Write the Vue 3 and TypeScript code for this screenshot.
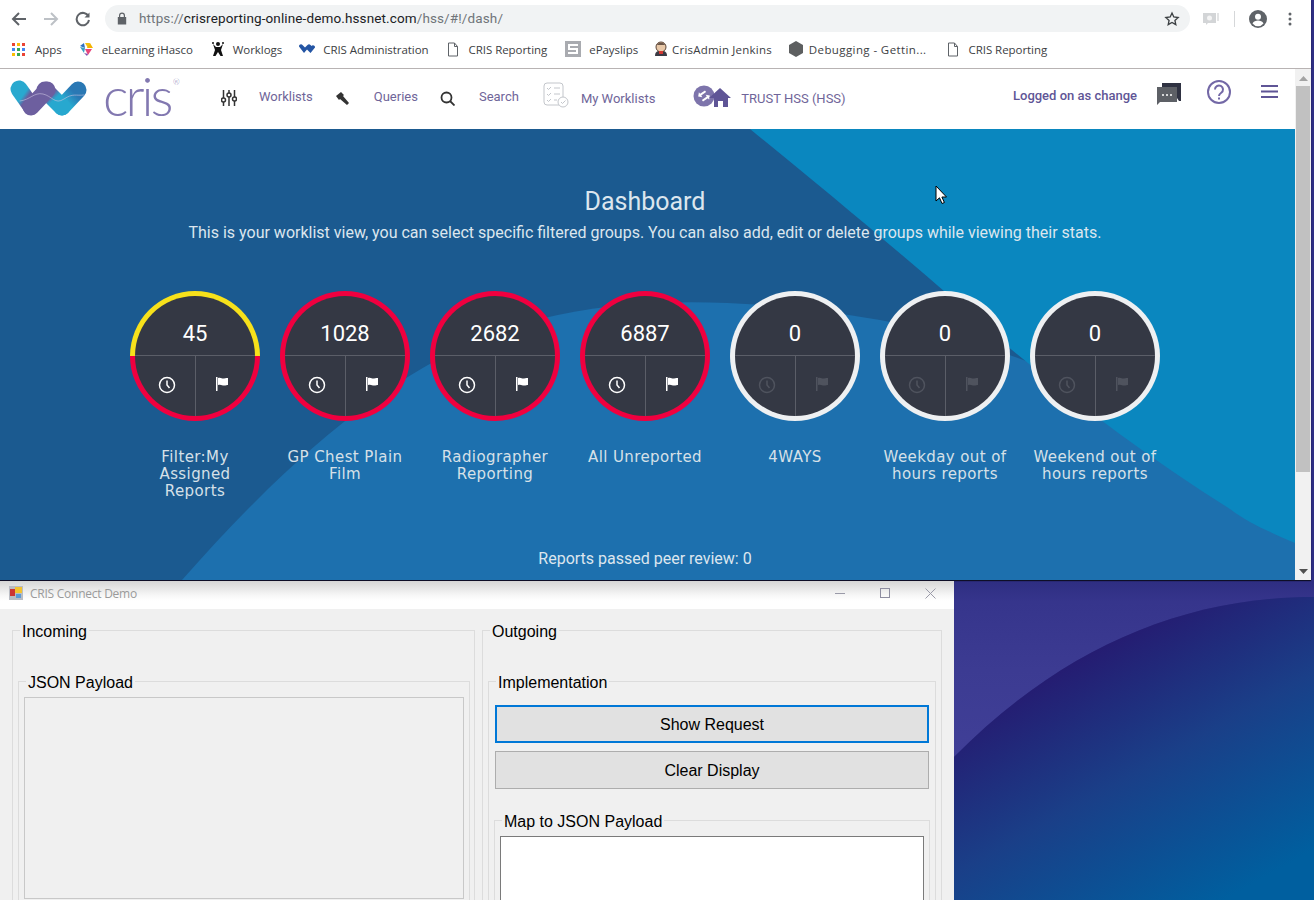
<template>
  <div class="desktop">
    <svg class="wallpaper" viewBox="0 0 1314 900" preserveAspectRatio="none">
      <defs>
        <linearGradient id="wallLow" x1="0.15" y1="0.1" x2="0.75" y2="1">
          <stop offset="0.18" stop-color="#251c72" />
          <stop offset="0.55" stop-color="#1a3f88" />
          <stop offset="1" stop-color="#005f9f" />
        </linearGradient>
        <linearGradient id="wallHigh" x1="0" y1="0" x2="0" y2="1">
          <stop offset="0" stop-color="#2e2e82" />
          <stop offset="0.12" stop-color="#36358c" />
          <stop offset="0.5" stop-color="#3c3b92" />
          <stop offset="1" stop-color="#403f97" />
        </linearGradient>
      </defs>
      <rect width="1314" height="900" fill="#2f2f84" />
      <path d="M954 581H1314V597C1180 597 1060 650 954 757Z" fill="url(#wallHigh)" />
      <path d="M954 757C1060 650 1180 597 1314 597V900H954Z" fill="url(#wallLow)" />
    </svg>

    <section class="browser">
      <div class="toolbar">
        <svg class="tool" width="16" height="16" viewBox="0 0 16 16" fill="none" stroke="#5f6368" stroke-width="2"><path d="M15 8H2M8 2L2 8l6 6" /></svg>
        <svg class="tool" width="16" height="16" viewBox="0 0 16 16" fill="none" stroke="#bdc1c6" stroke-width="2"><path d="M1 8h13M8 2l6 6-6 6" /></svg>
        <svg class="tool" width="16" height="16" viewBox="0 0 16 16" fill="none" stroke="#5f6368" stroke-width="2"><path d="M13.5 5.5A6.2 6.2 0 1 0 14 9" /><path d="M14.5 1.5v5h-5" fill="#5f6368" stroke="none" /></svg>
        <div class="omnibox">
          <svg width="10" height="13" viewBox="0 0 10 13"><path d="M2 5V3.6a3 3 0 0 1 6 0V5h1.2v7.5H.8V5zM3.2 5h3.6V3.6a1.8 1.8 0 0 0-3.6 0z" fill="#5f6368" /></svg>
          <span class="url"><span>https://</span><b>crisreporting-online-demo.hssnet.com</b><span>/hss/#!/dash/</span></span>
          <svg class="star" width="16" height="16" viewBox="0 0 24 24" fill="none" stroke="#3c4043" stroke-width="2"><path d="M12 3l2.7 6 6.5.7-4.8 4.4 1.3 6.4-5.7-3.2-5.7 3.2 1.3-6.4L2.800 9.700l6.500-.7z" /></svg>
        </div>
        <svg class="ext" width="16" height="14" viewBox="0 0 16 14"><path d="M0 1h13v10H5l-2 2v-2H0z" fill="#d3d5d7" /><rect x="14" y="1" width="2" height="8" fill="#e3e4e5" /><circle cx="6.500" cy="6" r="2.500" fill="#f4f4f4" /></svg>
        <i class="tool-sep"></i>
        <svg width="18" height="18" viewBox="0 0 18 18" class="avatar"><circle cx="9" cy="9" r="9" fill="#5f6368" /><circle cx="9" cy="6.800" r="3" fill="#fff" /><path d="M3.500 13.500c1-2.300 3.300-3 5.500-3s4.500.7 5.500 3a7 7 0 0 1-11 0z" fill="#fff" /></svg>
        <svg width="4" height="14" viewBox="0 0 4 14" class="kebab"><circle cx="2" cy="2" r="1.500" fill="#5f6368" /><circle cx="2" cy="7" r="1.500" fill="#5f6368" /><circle cx="2" cy="12" r="1.500" fill="#5f6368" /></svg>
      </div>

      <div class="bookmarks">
        <a class="mark mark-apps">
          <svg width="13" height="13" viewBox="0 0 13 13">
            <rect v-for="d in appDots" :key="d.x + '-' + d.y" :x="d.x" :y="d.y" width="3" height="3" :fill="d.c" />
          </svg>
          Apps
        </a>
        <a class="mark mark-learn">
          <svg width="15" height="15" viewBox="0 0 15 15"><path d="M1 4l4-3 1 5z" fill="#2f6fc0" /><path d="M6 1h5l-2 5z" fill="#f4c20d" /><path d="M11 1l3 5H8z" fill="#f4b400" /><path d="M1 5l5 1-1 5z" fill="#3aa0c8" /><path d="M6 7h7l-4 6z" fill="#e8457a" /><path d="M5 11l3 3 1-2z" fill="#7b4bb0" /></svg>
          eLearning iHasco
        </a>
        <a class="mark mark-logs">
          <svg width="14" height="16" viewBox="0 0 14 16"><circle cx="7" cy="3" r="2" fill="#111" /><circle cx="2" cy="2" r="1" fill="#111" /><circle cx="12" cy="2" r="1" fill="#111" /><path d="M2 3l3 3h4l3-3-2 6 2 6H9.500L7 11l-2.500 4H2l2-6z" fill="#111" /></svg>
          Worklogs
        </a>
        <a class="mark mark-admin">
          <svg width="16" height="10" viewBox="0 0 16 10"><path d="M0 2.500a2 2 0 0 1 3.500-1.500L6 3.500 8.500 1a2 2 0 0 1 3 0l1 1A2 2 0 0 1 16 3.500L11.500 9 8 5.500 5 9z" fill="#2455a4" /></svg>
          CRIS Administration
        </a>
        <a class="mark mark-doc">
          <svg width="12" height="15" viewBox="0 0 12 15" fill="#fff" stroke="#5f6368"><path d="M1.500 1h6l3 3.500v9.500h-9zM7.500 1v3.500h3" /></svg>
          CRIS Reporting
        </a>
        <a class="mark mark-pay">
          <svg width="16" height="16" viewBox="0 0 16 16"><rect width="16" height="16" fill="#a9abb0" /><path d="M3 3h10v2H5v2h8v6H3v-2h8V9H3z" fill="#fff" /></svg>
          ePayslips
        </a>
        <a class="mark mark-jenkins">
          <svg width="14" height="16" viewBox="0 0 14 16"><path d="M1 15c0-3 1-4 3-5h6c2 1 3 2 3 5z" fill="#3b3b45" /><circle cx="7" cy="6" r="5" fill="#e8c8a8" stroke="#5a4436" stroke-width="1" /><path d="M3 4c1-3 7-3 8 0z" fill="#6a5548" /><rect x="5" y="10" width="4" height="3" fill="#d33833" /></svg>
          CrisAdmin Jenkins
        </a>
        <a class="mark mark-debug">
          <svg width="14" height="16" viewBox="0 0 14 16"><path d="M7 0l7 4v8l-7 4-7-4V4z" fill="#5d5f60" /></svg>
          Debugging - Gettin...
        </a>
        <a class="mark mark-doc">
          <svg width="12" height="15" viewBox="0 0 12 15" fill="#fff" stroke="#5f6368"><path d="M1.500 1h6l3 3.500v9.500h-9zM7.500 1v3.500h3" /></svg>
          CRIS Reporting
        </a>
      </div>

      <div class="page">
        <div class="page-main">
          <header class="app-bar">
            <div class="brand">
              <svg width="78" height="36" viewBox="0 0 78 36" fill="none" stroke-width="17" stroke-linecap="round">
                <defs>
                  <linearGradient id="tealA" x1="0" y1="0" x2="1" y2="1">
                    <stop offset="0.35" stop-color="#29a9cf" />
                    <stop offset="0.6" stop-color="#6a5c9e" />
                  </linearGradient>
                  <linearGradient id="tealB" x1="0" y1="0" x2="1" y2="1">
                    <stop offset="0.3" stop-color="#6a5c9e" />
                    <stop offset="0.55" stop-color="#27a8cf" />
                  </linearGradient>
                  <linearGradient id="tealC" x1="0" y1="1" x2="1" y2="0">
                    <stop offset="0.3" stop-color="#27aad0" />
                    <stop offset="0.8" stop-color="#2a78b4" />
                  </linearGradient>
                </defs>
                <path d="M52 27L68 10" stroke="url(#tealC)" />
                <path d="M9 9L21 26" stroke="url(#tealA)" />
                <path d="M35 10L52 27" stroke="url(#tealB)" />
                <path d="M21 27L37 10" stroke="#6d5f9f" />
                <path d="M10 21C20 20 24 12 33 14S45 25 54 19 66 16 74 15" stroke="#c9c2e0" stroke-width=".6" />
              </svg>
              <div class="logo-word"><span>cris</span><sup>®</sup></div>
            </div>
            <nav class="app-nav">
              <a class="nav-link nav-worklists">
                <svg width="16" height="16" viewBox="0 0 16 16" fill="none" stroke="#333" stroke-width="1.500"><path d="M2.500 0v16M8 0v16M13.500 0v16" /><circle cx="2.500" cy="10" r="2" fill="#fff" /><circle cx="8" cy="5" r="2" fill="#fff" /><circle cx="13.500" cy="9" r="2" fill="#fff" /></svg>
                <span>Worklists</span>
              </a>
              <a class="nav-link nav-queries">
                <svg width="15" height="15" viewBox="0 0 15 15"><path d="M1 5l5-4 3 3-1 1 6 7-2 2-7-6-1 1z" fill="#333" /></svg>
                <span>Queries</span>
              </a>
              <a class="nav-link nav-search">
                <svg width="15" height="15" viewBox="0 0 15 15" fill="none" stroke="#333" stroke-width="1.800"><circle cx="6.500" cy="6.500" r="5" /><path d="M10 10l4.500 4.500" /></svg>
                <span>Search</span>
              </a>
              <a class="nav-link nav-mine">
                <svg width="26" height="26" viewBox="0 0 26 26" fill="none" stroke="#c3c6cb" stroke-width="1"><rect x="1" y="1" width="19" height="22" rx="3" /><path d="M4 6l1.500 1.500L8 5M4 12l1.500 1.500L8 11M4 18l1.500 1.500L8 17M11 6h6M11 12h6M11 18h3" /><circle cx="20" cy="20" r="5" fill="#fff" /><path d="M18 20l1.500 1.500 3-3" /></svg>
                <span>My Worklists</span>
              </a>
              <a class="nav-link nav-trust">
                <svg width="38" height="24" viewBox="0 0 38 24"><circle cx="11" cy="11" r="10.500" fill="#7d74ab" /><path d="M7 13h6v-2l3 3-3 3v-2H7zM15 9H9v2L6 8l3-3v2h6z" fill="#fff" transform="rotate(-35 11 11)" /><path d="M27 3l11 10h-3v9h-5v-6h-5v6h-4v-9h-5z" fill="#5f5596" /></svg>
                <span>TRUST HSS (HSS)</span>
              </a>
            </nav>
            <div class="app-actions">
              <span class="logged">Logged on as change</span>
              <svg class="act-chat" width="24" height="23" viewBox="0 0 24 23"><path d="M5 0h19v18h-2l-2-3H5z" fill="#2f3242" /><path d="M0 4h20v15H3l-3 3z" fill="#5d6066" /><circle cx="6" cy="12" r="1" fill="#fff" /><circle cx="10" cy="12" r="1" fill="#fff" /><circle cx="14" cy="12" r="1" fill="#fff" /></svg>
              <svg class="act-help" width="24" height="24" viewBox="0 0 24 24" fill="none" stroke="#7368a6" stroke-width="2"><circle cx="12" cy="12" r="11" /><path d="M8 9.500a4 4 0 1 1 6.300 3.200c-1.500 1-2.300 1.500-2.300 3.300" /><path d="M12 17.500v2" /></svg>
              <svg class="act-menu" width="17" height="13" viewBox="0 0 17 13" fill="#5f5596"><rect width="17" height="2" /><rect y="5.500" width="17" height="2" /><rect y="11" width="17" height="2" /></svg>
            </div>
          </header>

          <main class="dash">
            <svg class="dash-art" viewBox="0 0 1295 451" preserveAspectRatio="none">
              <rect width="1295" height="451" fill="#1b5a90" />
              <path d="M182 451C280 340 400 225 540 190C640 165 760 170 880 191C1040 220 1180 300 1295 372V451Z" fill="#1d70ae" />
              <path d="M750 0H1295V414C1270 403 1250 395 1230 380C1150 330 1070 270 1000 211C920 140 830 65 750 0Z" fill="#0a87bf" />
            </svg>
            <div class="dash-body">
              <h1>Dashboard</h1>
              <p class="intro">This is your worklist view, you can select specific filtered groups. You can also add, edit or delete groups while viewing their stats.</p>
              <ul class="dials">
                <li v-for="g in groups" :key="g.name" class="dial-col">
                  <div class="dial" :class="g.state">
                    <div class="dial-face">
                      <div class="dial-count">{{ g.count }}</div>
                      <div class="dial-split">
                        <div class="dial-cell clock-cell">
                          <svg width="18" height="18" viewBox="0 0 18 18" fill="none" stroke="currentColor" stroke-width="1.500"><circle cx="9" cy="9" r="7.500" /><path d="M9 4.500V9l2.500 3" /></svg>
                        </div>
                        <div class="dial-cell flag-cell">
                          <svg width="13" height="14" viewBox="0 0 13 14" fill="currentColor"><path d="M1 0h1.500v14H1zM3 1c3-1 4 1 6 .5S12 1 13 1v7c-1 0-2 .5-4 .5S6 7 3 8z" /></svg>
                        </div>
                      </div>
                    </div>
                  </div>
                  <div class="dial-name">{{ g.name }}</div>
                </li>
              </ul>
              <p class="peer">Reports passed peer review: 0</p>
            </div>
          </main>
        </div>

        <aside class="scrollbar">
          <svg width="9" height="5" viewBox="0 0 9 5" class="sb-up"><path d="M4.500 0L9 5H0z" fill="#a3a3a3" /></svg>
          <div class="sb-thumb"></div>
          <svg width="9" height="5" viewBox="0 0 9 5" class="sb-down"><path d="M0 0h9L4.500 5z" fill="#505050" /></svg>
        </aside>
      </div>
    </section>

    <section class="connect">
      <div class="title-bar">
        <svg width="14" height="14" viewBox="0 0 14 14"><rect width="14" height="14" fill="#b9bcc4" /><rect x="1" y="3" width="5" height="7" fill="#c33" /><rect x="6" y="1" width="7" height="6" fill="#f2c230" /><rect x="7" y="8" width="5" height="4" fill="#5a9ad5" /></svg>
        <span class="win-title">CRIS Connect Demo</span>
        <div class="win-controls">
          <svg width="10" height="10" viewBox="0 0 10 10" stroke="#9a9aa8" fill="none"><path d="M0 5.500h10" /></svg>
          <svg width="10" height="10" viewBox="0 0 10 10" stroke="#8d8da0" fill="none"><rect x=".5" y=".5" width="9" height="9" /></svg>
          <svg width="11" height="11" viewBox="0 0 11 11" stroke="#9a9aa8" fill="none"><path d="M.5.500l10 10M10.500.5l-10 10" /></svg>
        </div>
      </div>
      <div class="win-body">
        <fieldset class="group group-incoming">
          <legend>Incoming</legend>
          <fieldset class="group group-payload">
            <legend>JSON Payload</legend>
            <div class="text-box text-box-off"></div>
          </fieldset>
        </fieldset>
        <fieldset class="group group-outgoing">
          <legend>Outgoing</legend>
          <fieldset class="group group-impl">
            <legend>Implementation</legend>
            <button class="win-btn win-btn-focus">Show Request</button>
            <button class="win-btn">Clear Display</button>
            <fieldset class="group group-map">
              <legend>Map to JSON Payload</legend>
              <div class="text-box text-box-on"></div>
            </fieldset>
          </fieldset>
        </fieldset>
      </div>
    </section>

    <svg class="cursor" width="13" height="20" viewBox="0 0 13 20"><path d="M1 1v15l3.500-3.200L7 18.500l2.400-1-2.500-5.500H11.500z" fill="#fff" stroke="#000" stroke-width="1" /></svg>
  </div>
</template>

<script setup lang="ts">
interface Group {
  name: string
  count: number
  state: 'warn' | 'late' | 'idle'
}

const groups: Group[] = [
  { name: 'Filter:My Assigned Reports', count: 45, state: 'warn' },
  { name: 'GP Chest Plain Film', count: 1028, state: 'late' },
  { name: 'Radiographer Reporting', count: 2682, state: 'late' },
  { name: 'All Unreported', count: 6887, state: 'late' },
  { name: '4WAYS', count: 0, state: 'idle' },
  { name: 'Weekday out of hours reports', count: 0, state: 'idle' },
  { name: 'Weekend out of hours reports', count: 0, state: 'idle' }
]

const dotColours = ['#ea4335', '#fbbc05', '#ea4335', '#4285f4', '#34a853', '#4285f4', '#fbbc05', '#34a853', '#ea4335']
const appDots = dotColours.map((c, i) => ({ x: (i % 3) * 5, y: Math.floor(i / 3) * 5, c }))
</script>

<style>
html,
body {
  margin: 0;
  overflow: hidden;
}
</style>

<style scoped>
.desktop {
  position: relative;
  width: 1314px;
  height: 900px;
  overflow: hidden;
  background: #2f2f84;
  font-family: "Roboto", "Liberation Sans", sans-serif;
}

.wallpaper {
  position: absolute;
  left: 0;
  top: 0;
  width: 1314px;
  height: 900px;
}

/* browser window */
.browser {
  position: absolute;
  left: 0;
  top: 0;
  width: 1311px;
  height: 580px;
  background: #fff;
  display: flex;
  flex-direction: column;
  box-shadow: 0 1px 1px rgba(0, 0, 0, 0.7);
}

.toolbar {
  height: 37px;
  flex: none;
  display: flex;
  align-items: center;
  padding-left: 11px;
  box-sizing: border-box;
}

.tool {
  margin-right: 16px;
}

.tool:nth-child(3) {
  margin-right: 14px;
}

.omnibox {
  width: 1085px;
  height: 27px;
  border-radius: 14px;
  background: #f1f3f4;
  display: flex;
  align-items: center;
  padding: 0 10px 0 12px;
  box-sizing: border-box;
}

.url {
  margin: -2px 0 0 12px;
  font-size: 13.500px;
  color: #70757a;
  letter-spacing: 0.12px;
}

.url b {
  font-weight: 400;
  color: #202124;
}

.star {
  margin-left: auto;
}

.ext {
  margin-left: 13px;
}

.tool-sep {
  width: 1px;
  height: 16px;
  margin-left: 15px;
  background: #d5d7d9;
}

.avatar {
  margin-left: 14px;
}

.kebab {
  margin-left: 21px;
}

.bookmarks {
  height: 24px;
  flex: none;
  padding: 0 0 7px 12px;
  border-bottom: 1px solid #b8b3b3;
  display: flex;
  align-items: center;
  font-family: "Open Sans", "Noto Sans", sans-serif;
  font-size: 11.500px;
  letter-spacing: -0.05px;
  color: #3c4043;
  white-space: nowrap;
}

.mark {
  display: flex;
  align-items: center;
}

.mark-apps {
  gap: 10px;
  margin-right: 17px;
}

.mark-learn {
  gap: 8px;
  margin-right: 18px;
}

.mark-logs {
  gap: 8px;
  margin-right: 17px;
}

.mark-admin {
  gap: 8px;
  margin-right: 18px;
}

.mark-doc {
  gap: 10px;
  margin-right: 18px;
}

.mark-pay {
  gap: 8px;
  margin-right: 16px;
}

.mark-jenkins {
  gap: 4px;
  margin-right: 17px;
  letter-spacing: 0.2px;
}

.mark-debug {
  gap: 6px;
  margin-right: 20px;
  letter-spacing: 0.4px;
}

.page {
  flex: 1;
  min-height: 0;
  display: flex;
}

.page-main {
  width: 1295px;
  display: flex;
  flex-direction: column;
}

.scrollbar {
  width: 16px;
  background: #f1f1f1;
  display: flex;
  flex-direction: column;
  align-items: center;
  padding-top: 7px;
  box-sizing: border-box;
}

.sb-thumb {
  width: 14px;
  height: 386px;
  margin-top: 5px;
  background: #c1c1c1;
}

.sb-down {
  margin-top: auto;
  margin-bottom: 6px;
}

/* app header */
.app-bar {
  height: 60px;
  flex: none;
  display: flex;
  align-items: center;
  padding-left: 10px;
  box-sizing: border-box;
  background: #fff;
  color: #6f6599;
  font-size: 13px;
}

.brand {
  display: flex;
  align-items: center;
  margin-top: -3px;
}

.logo-word {
  width: 70px;
  margin-left: 15px;
  display: flex;
  font-family: "Lato", sans-serif;
  font-weight: 300;
  font-size: 54px;
  letter-spacing: -3px;
  line-height: 30px;
  color: #8278b0;
  position: relative;
}

.logo-word span {
  margin-top: -3px;
}

.logo-word sup {
  position: absolute;
  top: -6px;
  left: 70px;
  font-size: 8px;
  line-height: 8px;
  letter-spacing: 0;
}

.app-nav {
  display: flex;
  align-items: center;
  margin-left: 48px;
  margin-top: -2px;
}

.nav-link {
  display: flex;
  align-items: center;
  white-space: nowrap;
}

.nav-worklists {
  gap: 22px;
  margin-right: 22px;
}

.nav-queries {
  gap: 24px;
  margin-right: 22px;
}

.nav-search {
  gap: 24px;
  margin-right: 24px;
}

.nav-mine {
  gap: 12px;
  margin-right: 38px;
}

.nav-trust {
  gap: 10px;
}

.nav-worklists span,
.nav-queries span,
.nav-search span {
  margin-top: -4px;
}

.nav-mine svg {
  margin-top: -6px;
}

.nav-trust svg {
  margin-top: -2px;
}

.app-actions {
  margin-left: auto;
  display: flex;
  align-items: center;
  padding-right: 17px;
}

.logged {
  font-weight: 500;
  color: #5f5596;
  margin-top: -7px;
}

.act-chat {
  margin-left: 20px;
  margin-top: -10px;
}

.act-help {
  margin-left: 26px;
  margin-top: -15px;
}

.act-menu {
  margin-left: 30px;
  margin-top: -15px;
}

/* dashboard */
.dash {
  position: relative;
  flex: 1;
  min-height: 0;
  overflow: hidden;
}

.dash-art {
  position: absolute;
  left: 0;
  top: 0;
  width: 100%;
  height: 100%;
}

.dash-body {
  position: relative;
  height: 100%;
  box-sizing: border-box;
  padding: 58px 5px 0 0;
  display: flex;
  flex-direction: column;
  align-items: center;
  color: #dce6ee;
}

.dash-body h1 {
  margin: 0;
  font-size: 25px;
  line-height: 30px;
  font-weight: 400;
}

.intro {
  margin: 5px 0 0;
  font-size: 16px;
  line-height: 22px;
}

.dials {
  list-style: none;
  margin: 47px 0 0;
  padding: 0;
  display: flex;
}

.dial-col {
  width: 150px;
  display: flex;
  flex-direction: column;
  align-items: center;
}

.dial {
  width: 130px;
  height: 130px;
  padding: 5px;
  box-sizing: border-box;
  border-radius: 50%;
}

.dial.warn {
  background: linear-gradient(#f7e11b 50%, #f0003f 50%);
}

.dial.late {
  background: #f0003f;
}

.dial.idle {
  background: #eef0f2;
}

.dial-face {
  width: 100%;
  height: 100%;
  border-radius: 50%;
  overflow: hidden;
  background: #343844;
  display: flex;
  flex-direction: column;
}

.dial-count {
  height: 60px;
  flex: none;
  display: flex;
  align-items: center;
  justify-content: center;
  padding-top: 16px;
  box-sizing: border-box;
  font-size: 22px;
  color: #fff;
  border-bottom: 1px solid #5b5e68;
}

.dial-split {
  flex: 1;
  display: flex;
}

.dial-cell {
  display: flex;
  align-items: center;
  box-sizing: border-box;
  color: #fff;
}

.clock-cell {
  width: 61px;
  padding: 0 0 2px 23px;
  border-right: 1px solid #5b5e68;
}

.flag-cell {
  width: 59px;
  padding: 0 0 4px 19px;
}

.idle .dial-cell {
  color: #4f535e;
}

.dial-name {
  width: 130px;
  margin-top: 28px;
  text-align: center;
  font-family: "DejaVu Sans", sans-serif;
  font-size: 15px;
  letter-spacing: 0.4px;
  line-height: 17px;
  color: #d6e0e8;
}

.peer {
  position: absolute;
  left: 0;
  right: 5px;
  bottom: 10px;
  margin: 0;
  text-align: center;
  font-size: 16px;
  line-height: 22px;
}

/* winforms window */
.connect {
  position: absolute;
  left: 0;
  top: 581px;
  width: 954px;
  height: 319px;
  overflow: hidden;
  background: #f0f0f0;
  font-family: "Liberation Sans", sans-serif;
  color: #000;
}

.title-bar {
  height: 28px;
  display: flex;
  align-items: center;
  padding: 0 0 4px 9px;
  box-sizing: border-box;
  background: linear-gradient(#d6d6d6, #f6f6f6 14px, #fff 20px);
}

.win-title {
  margin-left: 7px;
  font-family: "Open Sans", sans-serif;
  font-size: 12px;
  letter-spacing: -0.25px;
  color: #9a9a9a;
}

.win-controls {
  margin-left: auto;
  display: flex;
  align-items: center;
  gap: 35px;
  padding-right: 18px;
}

.win-body {
  display: flex;
  gap: 7px;
  padding: 10px 12px 0;
}

.group {
  margin: 0;
  min-width: 0;
  border: 1px solid #dcdcdc;
  box-sizing: border-box;
}

.group legend {
  padding: 4px 2px 0;
  margin-left: 2px;
  font-size: 16px;
  line-height: 18px;
  font-family: "Liberation Sans", sans-serif;
}

.group-incoming {
  width: 463px;
  height: 340px;
  padding: 29px 4px 0 5px;
}

.group-payload {
  width: 452px;
  height: 260px;
  padding: 5px 5px 0;
}

.group-outgoing {
  width: 460px;
  height: 340px;
  padding: 29px 5px 0;
}

.group-impl {
  width: 448px;
  height: 260px;
  padding: 13px 5px 0;
}

.group-map {
  width: 436px;
  height: 120px;
  margin-top: 20px;
  padding: 5px 5px 0;
}

.text-box {
  height: 202px;
  box-sizing: border-box;
}

.text-box-off {
  border: 1px solid #c8c8c8;
  background: #f0f0f0;
}

.text-box-on {
  border: 1px solid #7a7a7a;
  background: #fff;
}

.win-btn {
  display: block;
  width: 434px;
  height: 38px;
  margin: 0 1px;
  padding: 2px 0 0;
  box-sizing: border-box;
  border: 1px solid #adadad;
  border-radius: 0;
  background: #e1e1e1;
  font-family: "Liberation Sans", sans-serif;
  font-size: 16px;
  color: #000;
}

.win-btn + .win-btn {
  margin-top: 8px;
}

.win-btn-focus {
  border: 2px solid #0078d7;
}

.cursor {
  position: absolute;
  left: 935px;
  top: 185px;
}
</style>
